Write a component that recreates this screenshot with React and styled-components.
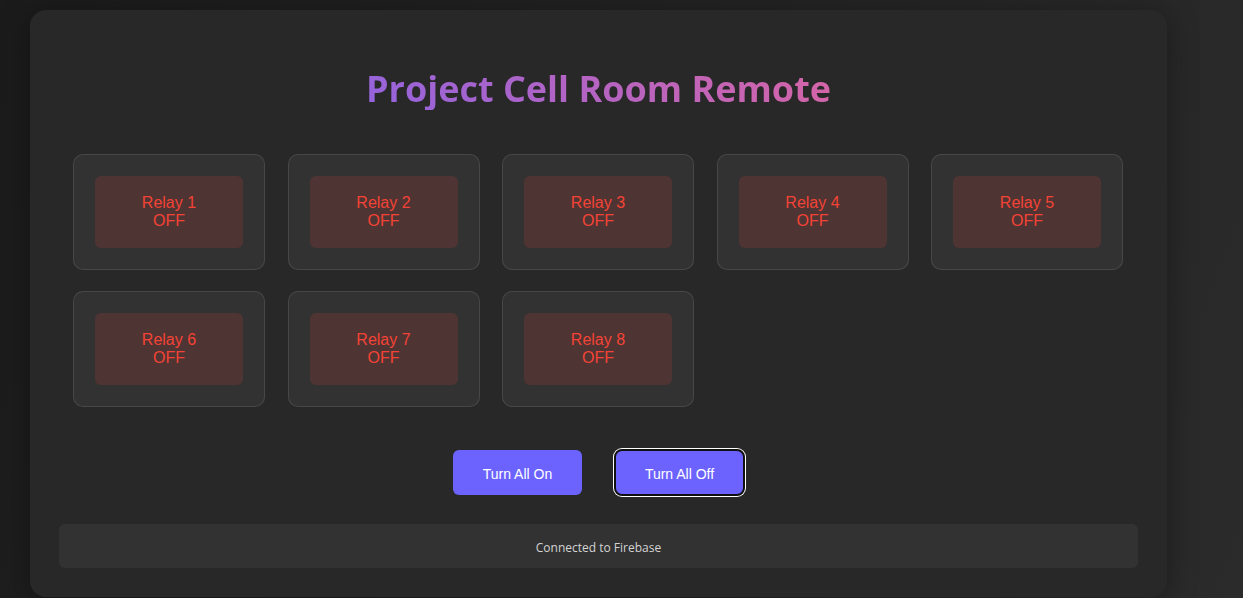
import React from 'react';
import styled, { createGlobalStyle } from 'styled-components';

const GlobalStyle = createGlobalStyle`
    html, body {
        margin: 0;
        padding: 0;
    }
    body {
        min-height: 598px;
        background: linear-gradient(110deg, #1b1b1b 0%, #2b2b2b 100%);
        font-family: "Liberation Sans", Arial, sans-serif;
        overflow: hidden;
    }
`;

const Page = styled.div`
    padding: 10px 0 0 30px;
`;

const Card = styled.div`
    width: 1137px;
    box-sizing: border-box;
    padding: 29px;
    background: #282828;
    border-radius: 16px;
    box-shadow: 0 4px 30px rgba(0, 0, 0, 0.35);
`;

const Title = styled.h1`
    margin: 28px 0 44px;
    font-family: "Open Sans", "Noto Sans", sans-serif;
    font-size: 36px;
    font-weight: 700;
    line-height: 1.2;
    text-align: center;
    background: linear-gradient(45deg, #6c63ff, #ff6584);
    -webkit-background-clip: text;
    background-clip: text;
    -webkit-text-fill-color: transparent;
    color: transparent;
`;

const RelayGrid = styled.div`
    display: grid;
    grid-template-columns: repeat(5, 192px);
    column-gap: 22.5px;
    row-gap: 21px;
    padding-left: 14px;
`;

const RelayCard = styled.div`
    box-sizing: border-box;
    height: 116px;
    padding: 21px;
    background: rgba(255, 255, 255, 0.05);
    border: 1px solid rgba(255, 255, 255, 0.1);
    border-radius: 10px;
`;

const RelayButton = styled.button`
    display: flex;
    flex-direction: column;
    align-items: center;
    justify-content: center;
    width: 100%;
    height: 100%;
    padding: 0;
    border: none;
    border-radius: 6px;
    font-family: "Liberation Sans", Arial, sans-serif;
    font-size: 16px;
    line-height: 18px;
    cursor: pointer;
    background: ${({ $on }) => ($on ? 'rgba(76, 175, 80, 0.15)' : 'rgba(244, 67, 54, 0.15)')};
    color: ${({ $on }) => ($on ? '#4caf50' : '#f44336')};
`;

const Controls = styled.div`
    display: flex;
    justify-content: center;
    gap: 33px;
    margin-top: 43px;
`;

const ControlButton = styled.button`
    width: 129px;
    height: 45px;
    padding: 3px 0 0;
    border: none;
    border-radius: 6px;
    background: #6c63ff;
    color: #fff;
    font-family: "Liberation Sans", Arial, sans-serif;
    font-size: 14px;
    cursor: pointer;

    ${({ $focused }) =>
        $focused &&
        `
        outline: 2px solid #101010;
        outline-offset: -1px;
        box-shadow: 0 0 0 2px #fff;
        border-radius: 7px;
    `}
`;

const Status = styled.div`
    margin-top: 29px;
    height: 44px;
    box-sizing: border-box;
    padding-top: 3px;
    display: flex;
    align-items: center;
    justify-content: center;
    background: rgba(255, 255, 255, 0.05);
    border-radius: 6px;
    font-family: "Open Sans", "Noto Sans", sans-serif;
    font-size: 12px;
    color: #d4d4d4;
`;

const relays = [1, 2, 3, 4, 5, 6, 7, 8].map((n) => ({ id: n, on: false }));

const App = () => {
    return (
        <>
            <GlobalStyle />
            <Page>
                <Card>
                    <Title>Project Cell Room Remote</Title>

                    <RelayGrid>
                        {relays.map((relay) => (
                            <RelayCard key={relay.id}>
                                <RelayButton $on={relay.on}>
                                    <span>Relay {relay.id}</span>
                                    <span>{relay.on ? 'ON' : 'OFF'}</span>
                                </RelayButton>
                            </RelayCard>
                        ))}
                    </RelayGrid>

                    <Controls>
                        <ControlButton>Turn All On</ControlButton>
                        <ControlButton $focused>Turn All Off</ControlButton>
                    </Controls>

                    <Status>Connected to Firebase</Status>
                </Card>
            </Page>
        </>
    );
};

export default App;
